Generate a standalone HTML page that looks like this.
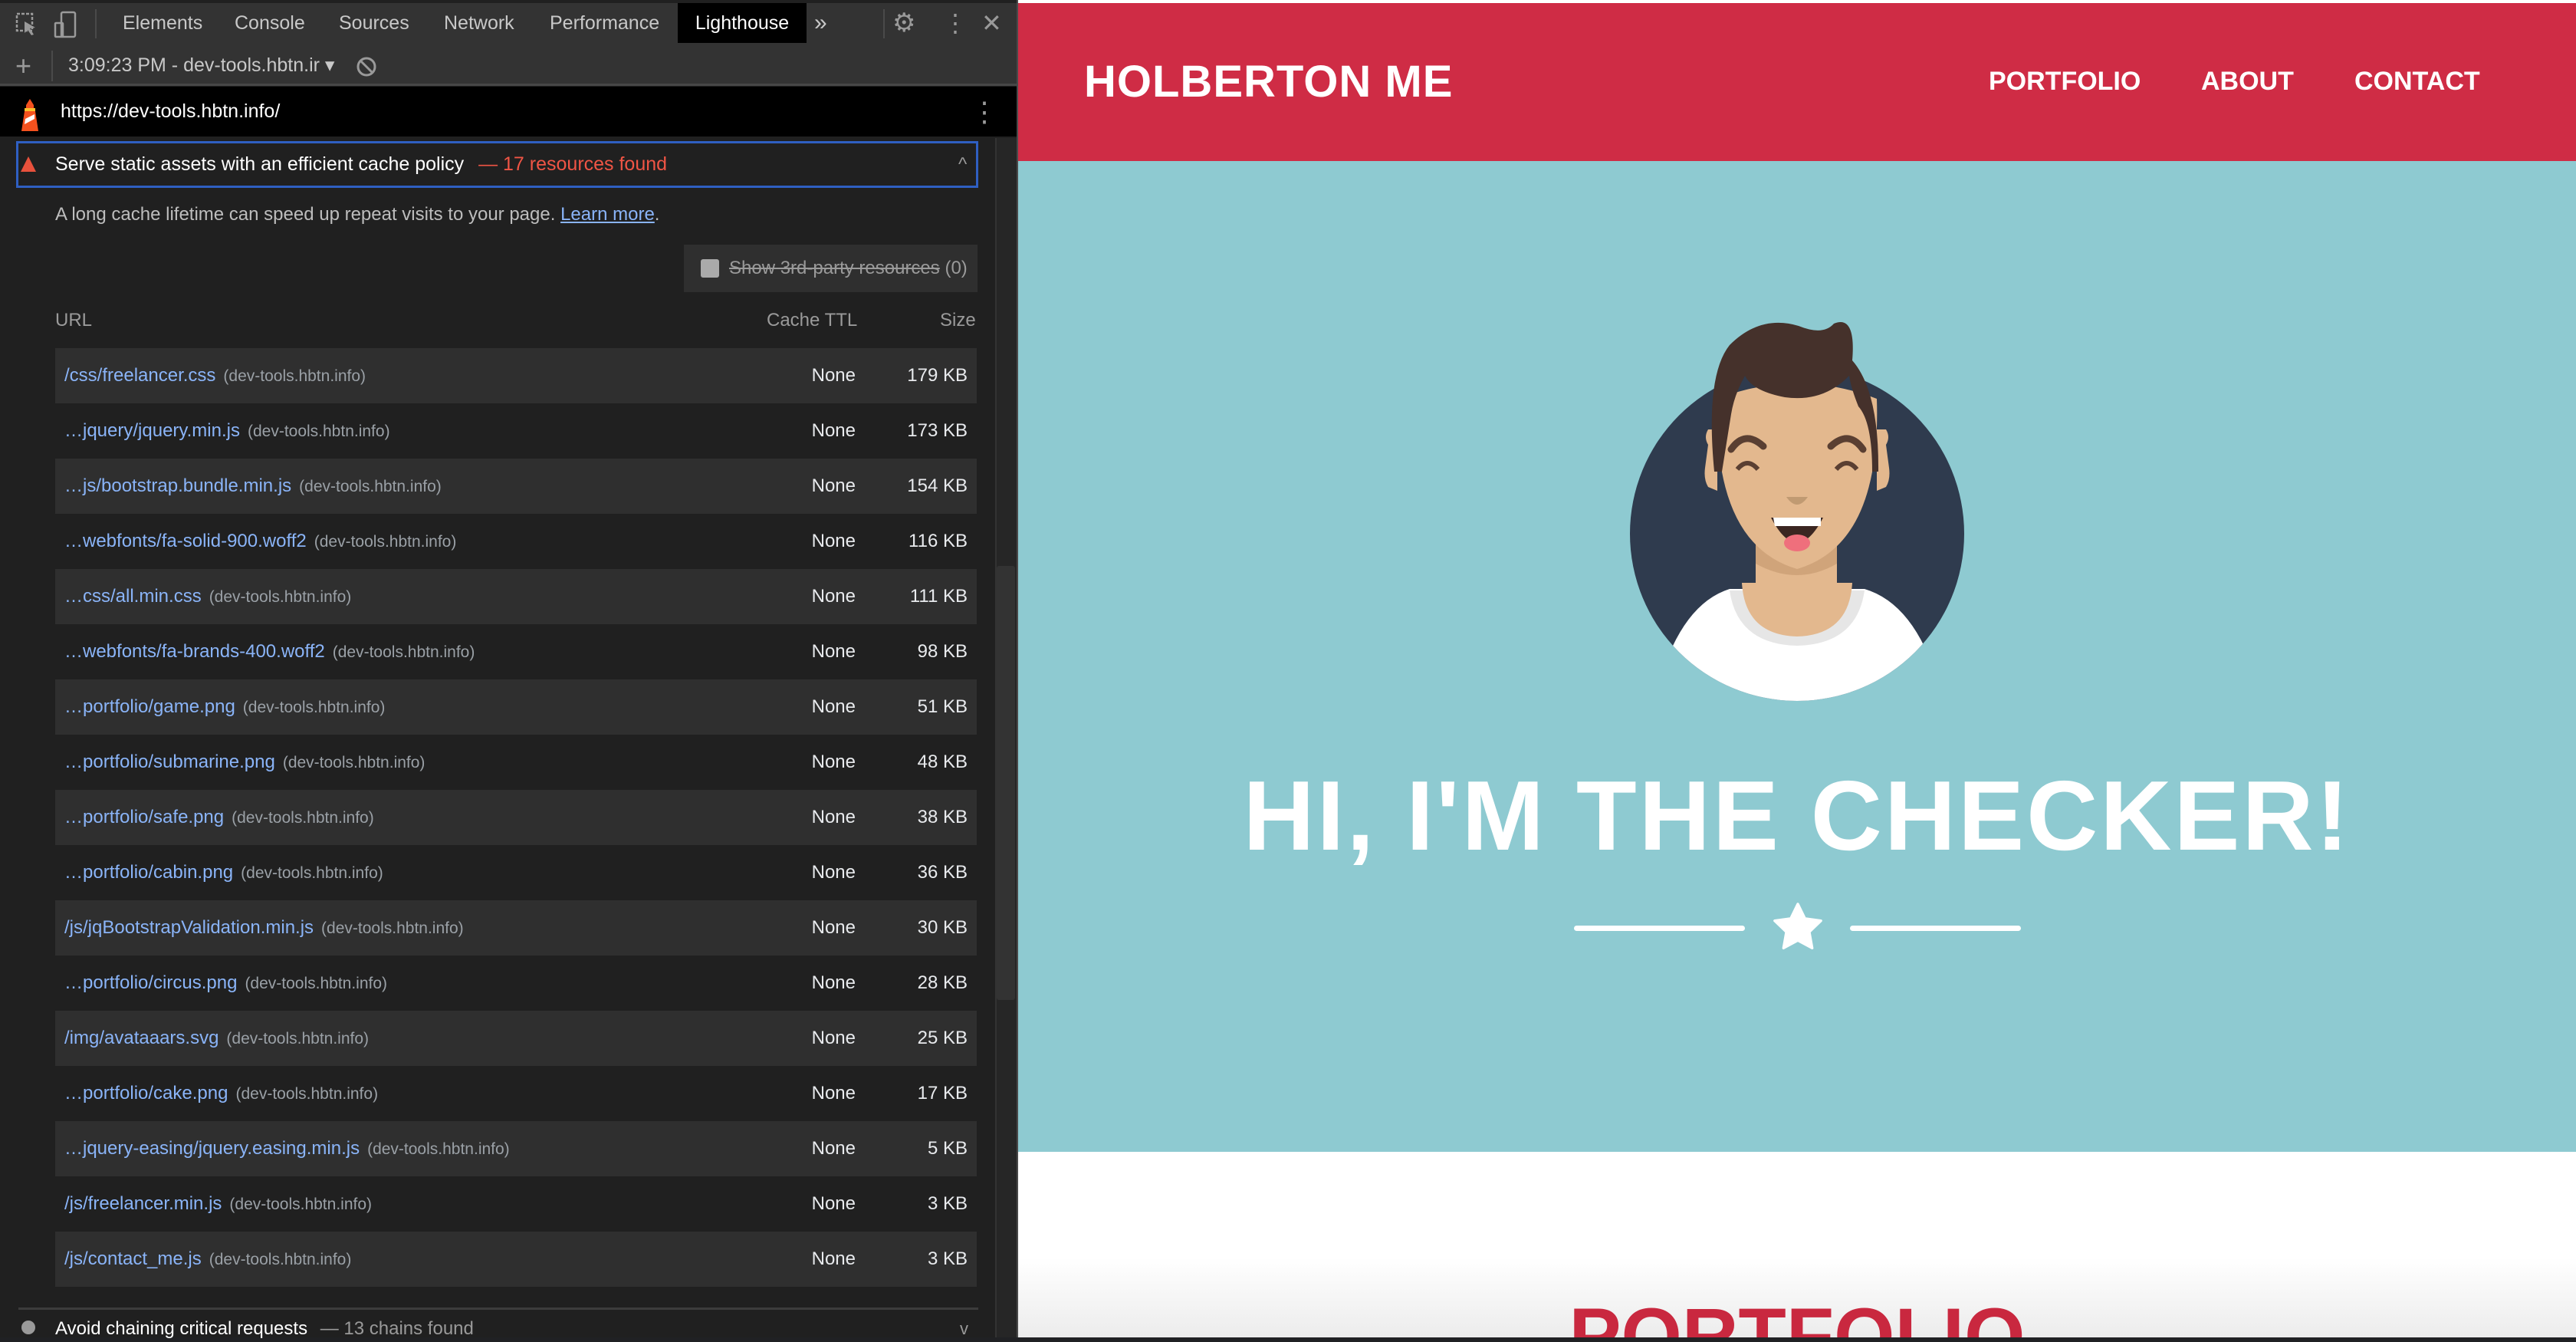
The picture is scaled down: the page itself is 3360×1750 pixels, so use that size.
<!DOCTYPE html>
<html><head><meta charset="utf-8"><style>
*{margin:0;padding:0;box-sizing:border-box}
body{width:3360px;height:1744px;overflow:hidden;position:relative;background:#202124;font-family:"Liberation Sans",Arial,sans-serif}
.a{position:absolute}
.dt{left:0;top:0;width:1326px;height:1744px;background:#202020;color:#e8eaed;font-size:25px}
.tabs{left:0;top:0;width:1326px;height:58px;background:#333;border-bottom:2px solid #3c3c3c;top:4px}
.tab{top:0;height:52px;line-height:52px;color:#c8c8c8;font-size:25px}
.tb2{left:0;top:60px;width:1326px;height:52px;background:#333;border-bottom:3px solid #474747}
.urlbar{left:0;top:113px;width:1326px;height:65px;background:#000}
.row{left:72px;width:1202px;height:72px;line-height:72px;font-size:23px}
.row .u{position:absolute;left:12px;color:#8ab4f8;font-size:24px}
.row .u span{color:#9aa0a6;font-size:21px;margin-left:10px}
.row .n{position:absolute;right:158px;color:#e8eaed;font-size:24px}
.row .s{position:absolute;right:12px;color:#e8eaed;font-size:24px}
.rp{left:1328px;top:0;width:2032px;height:1744px;background:#fff;overflow:hidden}
</style></head><body>
<div class="a" style="left:0;top:0;width:3360px;height:5px;background:#2a2a2a"></div>
<div class="a dt">
 <div class="a tabs">
  <svg class="a" style="left:20px;top:12px" width="30" height="32" viewBox="0 0 30 32"><rect x="2" y="2" width="20" height="22" fill="none" stroke="#9a9a9a" stroke-width="2.5" stroke-dasharray="4 2"/><path d="M12 12 L26 20 L19 21 L24 29 L21 30 L16 23 L12 27Z" fill="#9a9a9a"/></svg>
  <svg class="a" style="left:70px;top:10px" width="32" height="36" viewBox="0 0 32 36"><rect x="10" y="2" width="18" height="32" rx="2" fill="none" stroke="#9a9a9a" stroke-width="2.5"/><rect x="2" y="16" width="10" height="18" rx="1" fill="none" stroke="#9a9a9a" stroke-width="2.5"/></svg>
  <div class="a" style="left:124px;top:8px;width:2px;height:38px;background:#4a4a4a"></div>
  <div class="a tab" style="left:160px">Elements</div>
  <div class="a tab" style="left:306px">Console</div>
  <div class="a tab" style="left:442px">Sources</div>
  <div class="a tab" style="left:579px">Network</div>
  <div class="a tab" style="left:717px">Performance</div>
  <div class="a tab" style="left:884px;width:168px;background:#000;color:#fff;text-align:center">Lighthouse</div>
  <div class="a tab" style="left:1062px;font-size:30px">»</div>
  <div class="a" style="left:1152px;top:8px;width:2px;height:38px;background:#4a4a4a"></div>
  <div class="a tab" style="left:1164px;font-size:34px;color:#9a9a9a">⚙</div>
  <div class="a tab" style="left:1230px;font-size:32px;color:#9a9a9a">⋮</div>
  <div class="a tab" style="left:1280px;font-size:32px;color:#9a9a9a">✕</div>
 </div>
 <div class="a tb2">
  <div class="a" style="left:20px;top:4px;font-size:36px;color:#9a9a9a;line-height:44px">+</div>
  <div class="a" style="left:67px;top:6px;width:2px;height:40px;background:#4a4a4a"></div>
  <div class="a" style="left:89px;top:0;line-height:50px;color:#c8c8c8">3:09:23 PM - dev-tools.hbtn.ir ▾</div>
  <svg class="a" style="left:464px;top:13px" width="28" height="28" viewBox="0 0 28 28"><circle cx="14" cy="14" r="11" fill="none" stroke="#9a9a9a" stroke-width="3"/><path d="M7 7L21 21" stroke="#9a9a9a" stroke-width="3"/></svg>
 </div>
 <div class="a urlbar">
  <svg class="a" style="left:26px;top:16px" width="26" height="42" viewBox="0 0 26 42"><path d="M13 0L18 8V12H8V8Z" fill="#f4511e"/><rect x="6" y="12" width="14" height="4" fill="#fbc02d"/><path d="M6 16H20L24 42H2Z" fill="#f4511e"/><path d="M7 26L19 20V26L6 33Z" fill="#fff"/></svg>
  <div class="a" style="left:79px;top:0;line-height:65px;color:#fff;font-size:25px">https://dev-tools.hbtn.info/</div>
  <div class="a" style="left:1266px;top:0;line-height:65px;color:#9a9a9a;font-size:36px">⋮</div>
 </div>
 <div class="a" style="left:21px;top:184px;width:1255px;height:61px;border:3px solid #2f5fc2"></div>
 <svg class="a" style="left:26px;top:203px" width="22" height="22" viewBox="0 0 22 22"><path d="M11 1L21 21H1Z" fill="#e8513c"/></svg>
 <div class="a" style="left:72px;top:184px;line-height:61px;color:#fff;font-size:25px">Serve static assets with an efficient cache policy <span style="color:#f05545;margin-left:12px">— 17 resources found</span></div>
 <div class="a" style="left:1250px;top:184px;line-height:61px;color:#9a9a9a;font-size:24px">^</div>
 <div class="a" style="left:72px;top:262px;line-height:36px;color:#bdbdbd;font-size:24px">A long cache lifetime can speed up repeat visits to your page. <span style="color:#8ab4f8;text-decoration:underline">Learn more</span>.</div>
 <div class="a" style="left:892px;top:319px;width:383px;height:62px;background:#2f2f2f"></div>
 <div class="a" style="left:914px;top:338px;width:24px;height:24px;background:#aaa;border-radius:3px"></div>
 <div class="a" style="left:951px;top:319px;line-height:62px;color:#9a9a9a;font-size:24px"><s>Show 3rd-party resources</s> (0)</div>
 <div class="a" style="left:72px;top:398px;line-height:40px;color:#9a9a9a;font-size:24px">URL</div>
 <div class="a" style="left:1000px;top:398px;line-height:40px;color:#9a9a9a;font-size:24px">Cache TTL</div>
 <div class="a" style="left:1226px;top:398px;line-height:40px;color:#9a9a9a;font-size:24px">Size</div>

 <div class="a row" style="top:454px;background:#2f2f2f"><div class="u">/css/freelancer.css<span>(dev-tools.hbtn.info)</span></div><div class="n">None</div><div class="s">179 KB</div></div>
 <div class="a row" style="top:526px"><div class="u">…jquery/jquery.min.js<span>(dev-tools.hbtn.info)</span></div><div class="n">None</div><div class="s">173 KB</div></div>
 <div class="a row" style="top:598px;background:#2f2f2f"><div class="u">…js/bootstrap.bundle.min.js<span>(dev-tools.hbtn.info)</span></div><div class="n">None</div><div class="s">154 KB</div></div>
 <div class="a row" style="top:670px"><div class="u">…webfonts/fa-solid-900.woff2<span>(dev-tools.hbtn.info)</span></div><div class="n">None</div><div class="s">116 KB</div></div>
 <div class="a row" style="top:742px;background:#2f2f2f"><div class="u">…css/all.min.css<span>(dev-tools.hbtn.info)</span></div><div class="n">None</div><div class="s">111 KB</div></div>
 <div class="a row" style="top:814px"><div class="u">…webfonts/fa-brands-400.woff2<span>(dev-tools.hbtn.info)</span></div><div class="n">None</div><div class="s">98 KB</div></div>
 <div class="a row" style="top:886px;background:#2f2f2f"><div class="u">…portfolio/game.png<span>(dev-tools.hbtn.info)</span></div><div class="n">None</div><div class="s">51 KB</div></div>
 <div class="a row" style="top:958px"><div class="u">…portfolio/submarine.png<span>(dev-tools.hbtn.info)</span></div><div class="n">None</div><div class="s">48 KB</div></div>
 <div class="a row" style="top:1030px;background:#2f2f2f"><div class="u">…portfolio/safe.png<span>(dev-tools.hbtn.info)</span></div><div class="n">None</div><div class="s">38 KB</div></div>
 <div class="a row" style="top:1102px"><div class="u">…portfolio/cabin.png<span>(dev-tools.hbtn.info)</span></div><div class="n">None</div><div class="s">36 KB</div></div>
 <div class="a row" style="top:1174px;background:#2f2f2f"><div class="u">/js/jqBootstrapValidation.min.js<span>(dev-tools.hbtn.info)</span></div><div class="n">None</div><div class="s">30 KB</div></div>
 <div class="a row" style="top:1246px"><div class="u">…portfolio/circus.png<span>(dev-tools.hbtn.info)</span></div><div class="n">None</div><div class="s">28 KB</div></div>
 <div class="a row" style="top:1318px;background:#2f2f2f"><div class="u">/img/avataaars.svg<span>(dev-tools.hbtn.info)</span></div><div class="n">None</div><div class="s">25 KB</div></div>
 <div class="a row" style="top:1390px"><div class="u">…portfolio/cake.png<span>(dev-tools.hbtn.info)</span></div><div class="n">None</div><div class="s">17 KB</div></div>
 <div class="a row" style="top:1462px;background:#2f2f2f"><div class="u">…jquery-easing/jquery.easing.min.js<span>(dev-tools.hbtn.info)</span></div><div class="n">None</div><div class="s">5 KB</div></div>
 <div class="a row" style="top:1534px"><div class="u">/js/freelancer.min.js<span>(dev-tools.hbtn.info)</span></div><div class="n">None</div><div class="s">3 KB</div></div>
 <div class="a row" style="top:1606px;background:#2f2f2f"><div class="u">/js/contact_me.js<span>(dev-tools.hbtn.info)</span></div><div class="n">None</div><div class="s">3 KB</div></div>

 <div class="a" style="left:24px;top:1705px;width:1252px;height:3px;background:#3c3c3c"></div>
 <div class="a" style="left:28px;top:1722px;width:18px;height:18px;border-radius:50%;background:#9a9a9a"></div>
 <div class="a" style="left:72px;top:1716px;line-height:34px;color:#fff;font-size:24px">Avoid chaining critical requests <span style="color:#9a9a9a;margin-left:10px">— 13 chains found</span></div>
 <div class="a" style="left:1252px;top:1716px;line-height:34px;color:#9a9a9a;font-size:22px">v</div>
 <div class="a" style="left:1298px;top:180px;width:28px;height:1564px;background:#262626;border-left:2px solid #333"></div>
 <div class="a" style="left:1300px;top:738px;width:24px;height:566px;background:#333;border-radius:3px"></div>
</div>
<div class="a" style="left:1326px;top:0;width:2px;height:1744px;background:#4a4a4a"></div>
<div class="a rp">
 <div class="a" style="left:0;top:4px;width:2032px;height:206px;background:#cf2c45"></div>
 <div class="a" style="left:86px;top:72px;color:#fff;font-weight:bold;font-size:58px;line-height:70px;letter-spacing:1px">HOLBERTON ME</div>
 <div class="a" style="left:1266px;top:86px;color:#fff;font-weight:bold;font-size:34px;line-height:40px">PORTFOLIO</div>
 <div class="a" style="left:1543px;top:86px;color:#fff;font-weight:bold;font-size:34px;line-height:40px">ABOUT</div>
 <div class="a" style="left:1743px;top:86px;color:#fff;font-weight:bold;font-size:34px;line-height:40px">CONTACT</div>
 <div class="a" style="left:0;top:210px;width:2032px;height:1292px;background:#8ecad1"></div>
 <svg class="a" style="left:788px;top:410px" width="460" height="510" viewBox="0 0 460 510">
  <defs><clipPath id="c"><circle cx="228" cy="286" r="218"/><rect x="0" y="0" width="460" height="286"/></clipPath></defs>
  <circle cx="228" cy="286" r="218" fill="#2f3b4e"/>
  <g clip-path="url(#c)">
   <path d="M40 510 Q70 380 140 358 L316 358 Q390 380 420 510Z" fill="#fff"/>
   <path d="M140 360 Q150 430 228 432 Q306 430 316 360Z" fill="#e6e6e6"/>
   <path d="M156 350 Q160 418 228 420 Q296 418 300 350Z" fill="#e3b88e"/>
   <rect x="174" y="290" width="106" height="70" fill="#e3b88e"/>
   <path d="M174 300 Q228 345 280 300 V325 Q228 355 174 325Z" fill="#d0a47a"/>
  </g>
  <path d="M112 170 Q106 160 112 150 L124 150 V230 L112 225 Q106 215 108 200Z" fill="#e3b88e"/>
  <path d="M344 170 Q350 160 344 150 L332 150 V230 L344 225 Q350 215 348 200Z" fill="#e3b88e"/>
  <path d="M124 110 Q118 300 228 332 Q338 300 332 110 Q228 70 124 110Z" fill="#e3b88e"/>
  <path d="M120 205 Q108 80 140 40 Q180 0 230 15 Q262 28 276 12 Q305 0 300 60 Q335 100 334 205 L326 205 Q326 140 308 120 Q298 95 296 80 Q262 115 212 108 Q170 100 160 80 Q146 105 142 130 L130 205Z" fill="#45312b"/>
  <path d="M142 176 Q160 150 184 172" stroke="#5a3f32" stroke-width="9" fill="none" stroke-linecap="round"/>
  <path d="M272 172 Q296 150 314 176" stroke="#5a3f32" stroke-width="9" fill="none" stroke-linecap="round"/>
  <path d="M150 202 Q163 186 177 202" stroke="#5a3f32" stroke-width="6" fill="none"/>
  <path d="M279 202 Q293 186 306 202" stroke="#5a3f32" stroke-width="6" fill="none"/>
  <path d="M214 238 Q228 258 242 238Z" fill="#c09a72"/>
  <path d="M194 265 Q228 330 262 265Z" fill="#3b2621"/>
  <path d="M197 265 H259 V276 H199Z" fill="#fff"/>
  <ellipse cx="228" cy="298" rx="17" ry="11" fill="#ef6f7c"/>
 </svg>
 <div class="a" style="left:0;top:994px;width:2032px;text-align:center;color:#fff;font-weight:bold;font-size:129px;line-height:140px;letter-spacing:3px">HI, I'M THE CHECKER!</div>
 <div class="a" style="left:725px;top:1207px;width:223px;height:7px;border-radius:4px;background:#fff"></div>
 <div class="a" style="left:1085px;top:1207px;width:223px;height:7px;border-radius:4px;background:#fff"></div>
 <svg class="a" style="left:982px;top:1176px" width="70" height="66" viewBox="0 0 24 23"><path d="M12 1L15.2 7.6 22.5 8.6 17.2 13.7 18.5 21 12 17.5 5.5 21 6.8 13.7 1.5 8.6 8.8 7.6Z" fill="#fff" stroke="#fff" stroke-width="1.2" stroke-linejoin="round"/></svg>
 <div class="a" style="left:0;top:1640px;width:2032px;height:104px;background:linear-gradient(#fff,#ececec)"></div>
 <div class="a" style="left:0;top:1682px;width:2032px;text-align:center;color:#c9283f;font-weight:bold;font-size:102px;line-height:120px">PORTFOLIO</div>
</div>
</body></html>
